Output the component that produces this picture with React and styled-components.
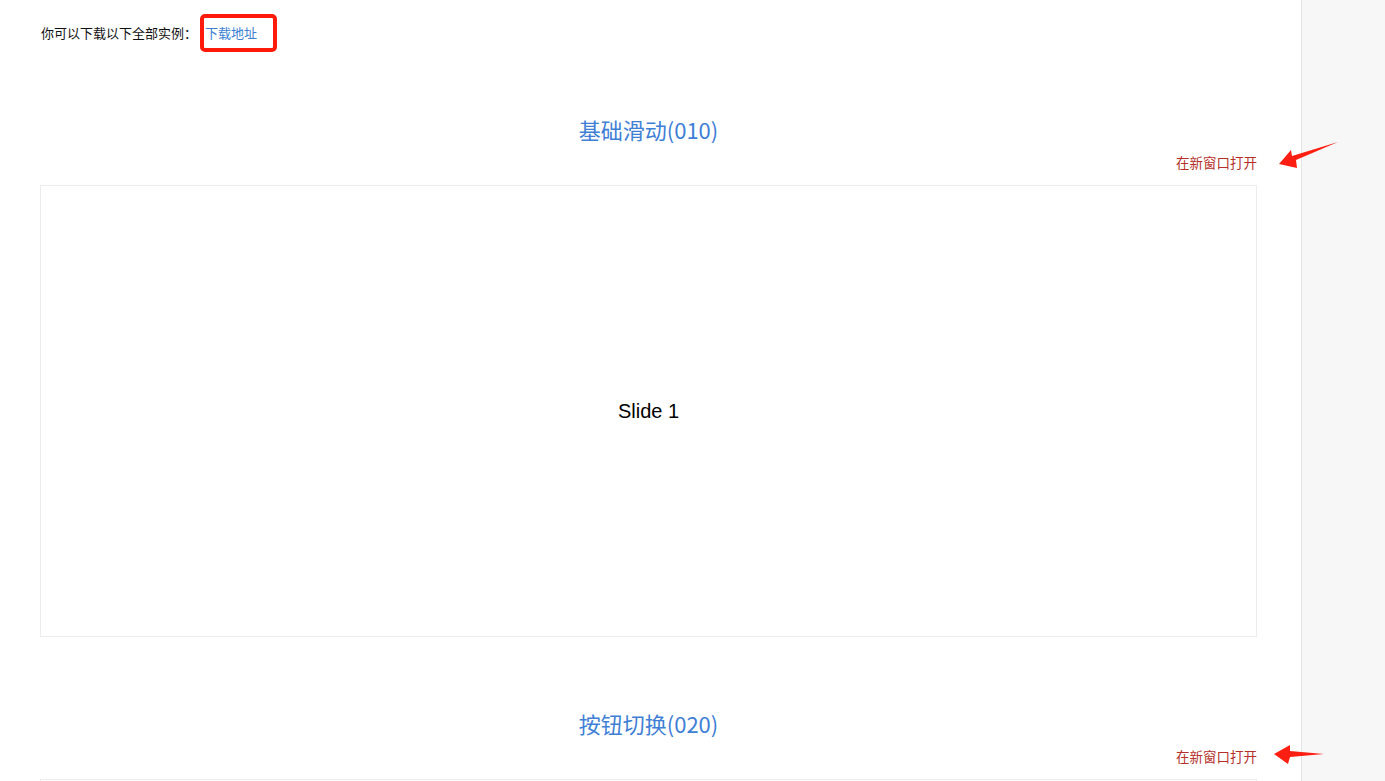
import styled, { createGlobalStyle } from "styled-components";

const GlobalStyle = createGlobalStyle`
    html, body {
        margin: 0;
        padding: 0;
        background: #fff;
        font-family: "Noto Sans CJK SC", "Noto Sans", sans-serif;
    }
`;

const Page = styled.div`
    position: relative;
    display: flex;
    min-height: 100vh;
`;

const Main = styled.main`
    flex: 1;
    padding: 24px 44px 0 40px;
`;

const Sidebar = styled.aside`
    width: 83px;
    background: #f7f7f7;
    border-left: 1px solid #e4e4e4;
`;

const Note = styled.p`
    margin: 0 0 0 1px;
    font-size: 13px;
    line-height: 18px;
    color: #111;
`;

const Marked = styled.span`
    position: relative;
    margin-left: 8px;

    &::after {
        content: "";
        position: absolute;
        left: -5px;
        top: -9px;
        width: 69px;
        height: 30px;
        border: 4px solid #ff1a0a;
        border-radius: 5px;
    }
`;

const DownloadLink = styled.a`
    color: #3a7fd5;
    text-decoration: none;
`;

const Section = styled.section`
    margin-top: ${props => (props.first ? "72px" : "71px")};
`;

const Title = styled.h2`
    margin: 0;
    text-align: center;
    font-size: 22px;
    line-height: 30px;
    font-weight: 400;
    color: #3f7fd6;
`;

const OpenRow = styled.div`
    display: flex;
    justify-content: flex-end;
    margin-top: 9px;
`;

const OpenLink = styled.a`
    font-size: 13.5px;
    line-height: 18px;
    color: #b5302a;
    text-decoration: none;
`;

const Demo = styled.div`
    margin-top: 14px;
    height: 450px;
    border: 1px solid #ececec;
    display: flex;
    align-items: center;
    justify-content: center;
    font-family: "Liberation Sans", Arial, sans-serif;
    font-size: 20px;
    color: #000;
`;

const Arrow = styled.svg`
    position: absolute;
    left: 0;
    top: 0;
    pointer-events: none;
`;

const sections = [
    { title: "基础滑动(010)", slide: "Slide 1" },
    { title: "按钮切换(020)", slide: "Slide 1" },
];

const App = () => {
    return (
        <>
            <GlobalStyle />
            <Page>
                <Main>
                    <Note>
                        你可以下载以下全部实例：
                        <Marked>
                            <DownloadLink href="#">下载地址</DownloadLink>
                        </Marked>
                    </Note>
                    {sections.map((s, i) => (
                        <Section key={i} first={i === 0}>
                            <Title>{s.title}</Title>
                            <OpenRow>
                                <OpenLink href="#">在新窗口打开</OpenLink>
                            </OpenRow>
                            <Demo>{s.slide}</Demo>
                        </Section>
                    ))}
                </Main>
                <Sidebar />
                <Arrow width="1385" height="800" viewBox="0 0 1385 800">
                    <polygon
                        points="1279,164 1291,150 1292,156 1338,142 1296,160 1297,168"
                        fill="#ff1f12"
                    />
                    <polygon
                        points="1274,754 1290,745 1290,751 1324,754 1290,757 1288,764"
                        fill="#ff1f12"
                    />
                </Arrow>
            </Page>
        </>
    );
};

export default App;
